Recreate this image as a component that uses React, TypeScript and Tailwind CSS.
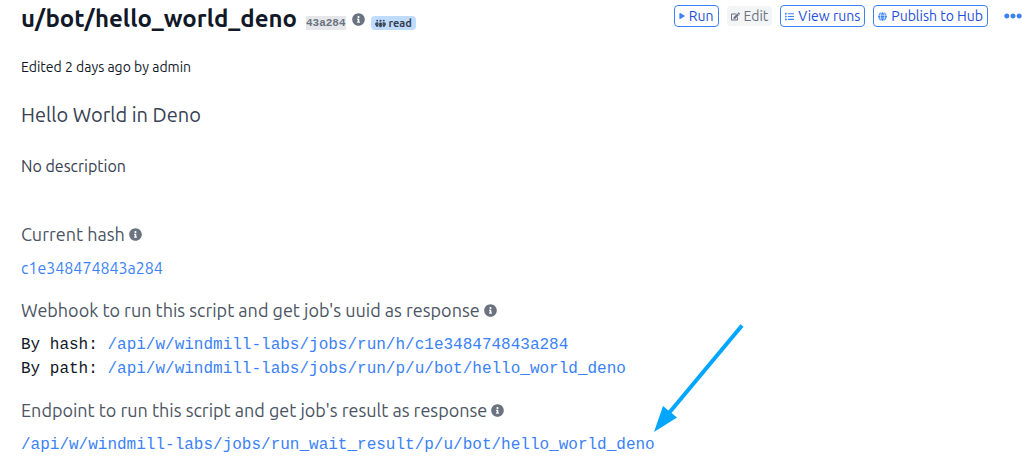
import type { ReactNode } from "react";
import { FaEdit, FaEllipsisH, FaGlobe, FaInfoCircle, FaList, FaPlay } from "react-icons/fa";
import { FaPeopleGroup } from "react-icons/fa6";

function Info({ label }: { label: string }) {
  return (
    <button type="button" aria-label={label} className="shrink-0 text-[#6b7280]">
      <FaInfoCircle className="size-[13px]" />
    </button>
  );
}

function Action({ icon, children }: { icon: ReactNode; children: ReactNode }) {
  return (
    <button
      type="button"
      className="flex h-[22px] items-center gap-1 rounded border border-[#3b82f6] px-1 text-sm leading-5 whitespace-nowrap text-[#1d4ed8]"
    >
      <span className="text-[#3b82f6]">{icon}</span>
      {children}
    </button>
  );
}

function SectionTitle({ children, info }: { children: ReactNode; info: string }) {
  return (
    <div className="flex items-center gap-1">
      <h2 className="text-lg leading-7 text-[#4b5563]">{children}</h2>
      <Info label={info} />
    </div>
  );
}

function Path({ children }: { children: string }) {
  return (
    <a href={children} className="text-[#3b82f6]">
      {children}
    </a>
  );
}

export default function App() {
  return (
    <main className="relative bg-white pr-3 pl-[21px] font-['Ubuntu','Noto_Sans',sans-serif] text-[#111827]">
      <header className="flex items-start justify-between pt-[5px]">
        <div className="flex items-center">
          <h1 className="text-2xl leading-7 font-bold">u/bot/hello_world_deno</h1>
          <code className="mt-2 ml-[9px] bg-[#e5e7eb] font-['Liberation_Mono',monospace] text-[11px] leading-[14px] font-bold text-[#6b7280]">
            43a284
          </code>
          <span className="ml-[6px] flex">
            <Info label="About the script version" />
          </span>
          <span className="mt-2 ml-[6px] flex h-[14px] items-center gap-[3px] rounded bg-[#bfdbfe] px-1 text-[11px] leading-[14px] font-bold text-[#374151]">
            <FaPeopleGroup className="size-[11px]" />
            read
          </span>
        </div>
        <div className="flex items-center gap-2">
          <Action icon={<FaPlay className="size-[6px]" />}>Run</Action>
          <button
            type="button"
            disabled
            className="flex h-5 items-center gap-1 rounded bg-[#f3f4f6] px-1 text-sm leading-5 text-[#6b7280]"
          >
            <FaEdit className="size-[9px]" />
            Edit
          </button>
          <Action icon={<FaList className="size-[9px]" />}>View runs</Action>
          <Action icon={<FaGlobe className="size-[9px]" />}>Publish to Hub</Action>
          <button type="button" aria-label="More actions" className="ml-2 text-[#3b82f6]">
            <FaEllipsisH className="size-[18px]" />
          </button>
        </div>
      </header>

      <p className="mt-6 text-sm leading-5">Edited 2 days ago by admin</p>
      <h2 className="mt-6 text-xl leading-7 text-[#374151]">Hello World in Deno</h2>
      <p className="mt-[25px] text-base leading-6 text-[#374151]">No description</p>

      <section className="mt-[42px]">
        <SectionTitle info="About the current hash">Current hash</SectionTitle>
        <a href="#c1e348474843a284" className="mt-2 block w-fit text-base leading-6 text-[#3b82f6]">
          c1e348474843a284
        </a>
      </section>

      <section className="mt-4">
        <SectionTitle info="About the webhook">Webhook to run this script and get job's uuid as response</SectionTitle>
        <ul className="mt-[9px] font-['Liberation_Mono',monospace] text-base leading-6">
          <li>
            By hash: <Path>/api/w/windmill-labs/jobs/run/h/c1e348474843a284</Path>
          </li>
          <li>
            By path: <Path>/api/w/windmill-labs/jobs/run/p/u/bot/hello_world_deno</Path>
          </li>
        </ul>
      </section>

      <section className="mt-[15px] pb-2">
        <SectionTitle info="About the endpoint">Endpoint to run this script and get job's result as response</SectionTitle>
        <p className="mt-[9px] font-['Liberation_Mono',monospace] text-base leading-6">
          <Path>/api/w/windmill-labs/jobs/run_wait_result/p/u/bot/hello_world_deno</Path>
        </p>
      </section>

      <svg
        aria-hidden="true"
        viewBox="0 0 90 108"
        className="pointer-events-none absolute top-[324px] left-[654px] h-[108px] w-[90px] text-[#00a6ff]"
      >
        <path d="M88 1.500 L15 89" fill="none" stroke="currentColor" strokeWidth="4" />
        <path d="M0 108 L9 82 L23 93.500 Z" fill="currentColor" />
      </svg>
    </main>
  );
}
